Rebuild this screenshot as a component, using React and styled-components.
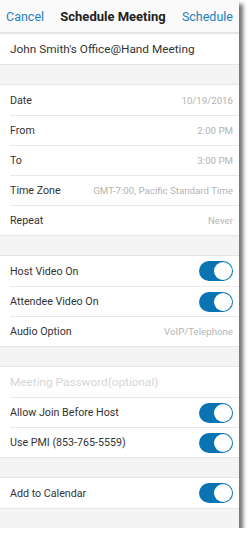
import styled, { createGlobalStyle } from "styled-components";

const Global = createGlobalStyle`
  body {
    margin: 0;
    background: #fff;
    font-family: Roboto, "Liberation Sans", sans-serif;
  }
`;

const Screen = styled.div`
  width: 239px;
  height: 528px;
  background: #f4f4f4;
  box-shadow: 4px 4px 4px rgba(0, 0, 0, 0.55);
  overflow: hidden;
`;

const Header = styled.div`
  height: 32px;
  display: flex;
  align-items: center;
  justify-content: space-between;
  padding: 0 6px;
  background: #fafafa;
  border-bottom: 1px solid #e4e4e4;
`;

const NavButton = styled.span`
  color: #1f7fc0;
  font-size: 12.5px;
`;

const Title = styled.span`
  color: #222;
  font-size: 13px;
  font-weight: 700;
`;

const Group = styled.div`
  background: #fff;
  border-top: 1px solid #e6e6e6;
  border-bottom: 1px solid #e6e6e6;
  margin-top: ${(p) => (p.$gap ? "19px" : "0")};
  padding-left: 10px;
`;

const Row = styled.div`
  box-sizing: border-box;
  height: 30px;
  display: flex;
  align-items: center;
  justify-content: space-between;
  padding-right: 6px;
  & + & {
    border-top: 1px solid #e9e9e9;
  }
`;

const Label = styled.span`
  color: ${(p) => (p.$placeholder ? "#d6d6d6" : "#333")};
  font-size: ${(p) => (p.$big ? "11.8px" : "10.7px")};
`;

const Value = styled.span`
  color: #b4b4b4;
  font-size: 9.7px;
`;

const Track = styled.span`
  width: 34px;
  height: 20px;
  border-radius: 10px;
  background: #0a74b3;
  display: flex;
  align-items: center;
  justify-content: flex-end;
  box-sizing: border-box;
  padding: 1px;
`;

const Knob = styled.span`
  width: 18px;
  height: 18px;
  border-radius: 50%;
  background: #fff;
`;

const Toggle = () => (
  <Track>
    <Knob />
  </Track>
);

export default () => (
  <>
    <Global />
    <Screen>
      <Header>
        <NavButton>Cancel</NavButton>
        <Title>Schedule Meeting</Title>
        <NavButton>Schedule</NavButton>
      </Header>
      <Group>
        <Row>
          <Label $big>John Smith's Office@Hand Meeting</Label>
        </Row>
      </Group>
      <Group $gap>
        <Row>
          <Label>Date</Label>
          <Value>10/19/2016</Value>
        </Row>
        <Row>
          <Label>From</Label>
          <Value>2:00 PM</Value>
        </Row>
        <Row>
          <Label>To</Label>
          <Value>3:00 PM</Value>
        </Row>
        <Row>
          <Label>Time Zone</Label>
          <Value>GMT-7:00, Pacific Standard Time</Value>
        </Row>
        <Row>
          <Label>Repeat</Label>
          <Value>Never</Value>
        </Row>
      </Group>
      <Group $gap>
        <Row>
          <Label>Host Video On</Label>
          <Toggle />
        </Row>
        <Row>
          <Label>Attendee Video On</Label>
          <Toggle />
        </Row>
        <Row>
          <Label>Audio Option</Label>
          <Value>VoIP/Telephone</Value>
        </Row>
      </Group>
      <Group $gap>
        <Row>
          <Label $placeholder $big>Meeting Password(optional)</Label>
        </Row>
        <Row>
          <Label>Allow Join Before Host</Label>
          <Toggle />
        </Row>
        <Row>
          <Label>Use PMI (853-765-5559)</Label>
          <Toggle />
        </Row>
      </Group>
      <Group $gap>
        <Row>
          <Label>Add to Calendar</Label>
          <Toggle />
        </Row>
      </Group>
    </Screen>
  </>
);
